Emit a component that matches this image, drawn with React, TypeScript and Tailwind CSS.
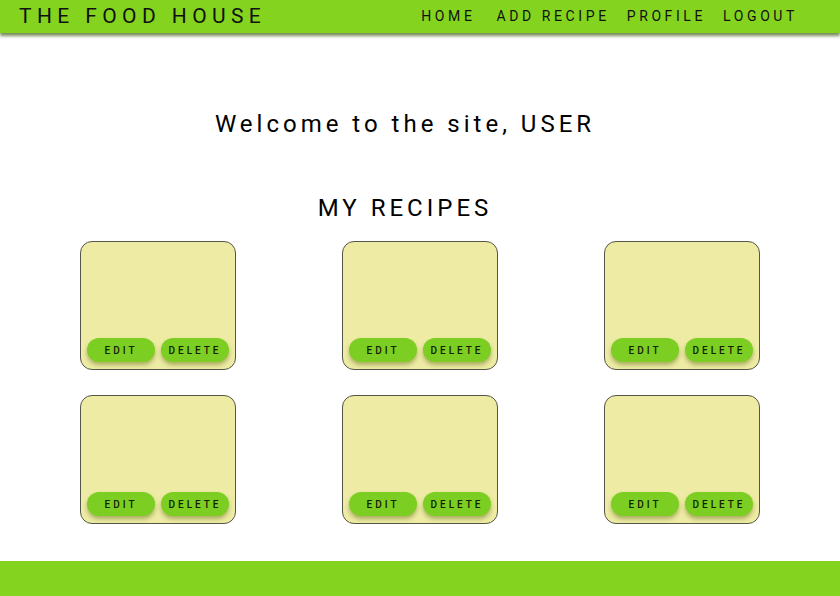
import React from 'react'

const recipes = [1, 2, 3, 4, 5, 6]

const RecipeCard = () => {
  return (
    <div className="flex h-[129px] w-[156px] flex-col justify-end rounded-xl border border-[#55554a] bg-[#eeeca4] px-[6px] pb-[7px]">
      <div className="flex justify-between">
        <button className="h-[24px] w-[68px] rounded-full bg-[#7ccf22] text-[10px] font-medium tracking-[3px] text-[#132000] shadow-[0_3px_4px_rgba(90,100,20,0.45)]">
          EDIT
        </button>
        <button className="h-[24px] w-[68px] rounded-full bg-[#7ccf22] text-[10px] font-medium tracking-[3px] text-[#132000] shadow-[0_3px_4px_rgba(90,100,20,0.45)]">
          DELETE
        </button>
      </div>
    </div>
  )
}

const App = () => {
  return (
    <div className="flex min-h-screen flex-col bg-white font-['Roboto',sans-serif] text-black">
      <header className="flex h-[33px] items-center justify-between bg-[#84d41f] pl-[19px] pr-[42px] shadow-[0_3px_3px_rgba(60,90,20,0.7)]">
        <span className="text-[21px] tracking-[5.4px] text-[#111]">THE FOOD HOUSE</span>
        <nav className="flex gap-[17px] text-[14px] tracking-[3.6px] text-[#111]">
          <a className="mr-[4px]">HOME</a>
          <a>ADD RECIPE</a>
          <a>PROFILE</a>
          <a>LOGOUT</a>
        </nav>
      </header>

      <main className="flex flex-1 flex-col items-center">
        <div className="mr-[30px] flex flex-col items-center">
          <h1 className="mt-[77px] text-[24px] leading-[28px] tracking-[4px]">Welcome to the site, USER</h1>
          <h2 className="mt-[56px] text-[24px] leading-[28px] tracking-[4px]">MY RECIPES</h2>
        </div>
        <div className="mt-[19px] grid w-full grid-cols-3 justify-items-center gap-y-[25px] px-[27px]">
          {recipes.map((id) => (
            <RecipeCard key={id} />
          ))}
        </div>
      </main>

      <footer className="h-[35px] bg-[#84d41f]" />
    </div>
  )
}

export default App
